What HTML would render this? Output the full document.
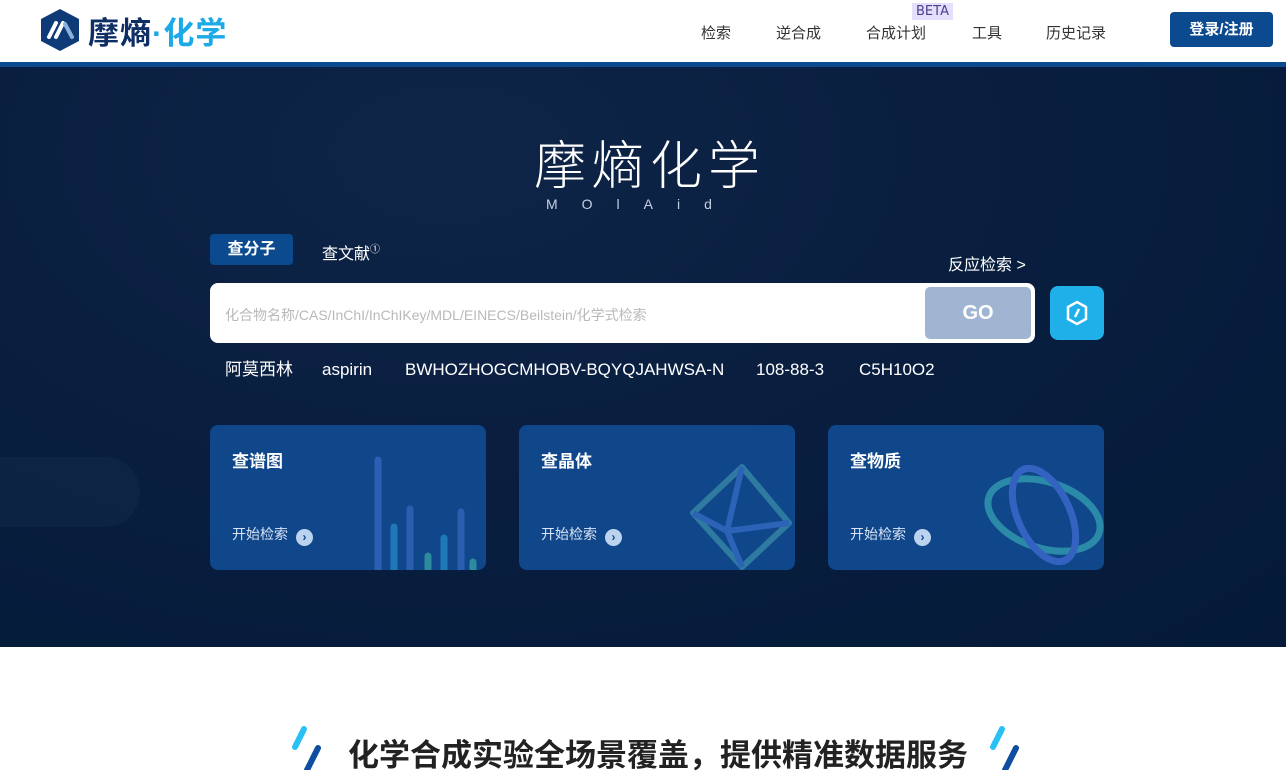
<!DOCTYPE html>
<html><head><meta charset="utf-8"><style>
*{margin:0;padding:0;box-sizing:border-box}
body{width:1286px;height:770px;overflow:hidden;background:#fff;font-family:"Liberation Sans","Noto Sans CJK SC",sans-serif;position:relative}
.a{position:absolute}
.nav{font-size:15px;color:#333;top:22px}
.hero{top:62px;left:0;width:1286px;height:585px;background:radial-gradient(ellipse at 35% 15%,#0e2548 0%,#0a1f40 40%,#041a38 100%);border-top:5px solid #0a4a8f}
.card{background:#10478a;border-radius:8px;width:276px;height:145px;top:425px;overflow:hidden}
.card .t{position:absolute;left:22px;top:22px;color:#fff;font-weight:bold;font-size:17px}
.card .s{position:absolute;left:22px;top:99px;color:#d8e4f5;font-size:14px}
.arr{display:inline-block;width:17px;height:17px;border-radius:50%;background:#bcd3f0;color:#10478a;font-size:12px;text-align:center;line-height:17px;margin-left:8px;vertical-align:-2px;font-weight:bold}
.q{color:#fff;font-size:17px;top:359px;line-height:22px}
</style></head><body>
<svg class="a" style="left:40px;top:8px" width="40" height="44" viewBox="0 0 40 44"><polygon points="20,1 39,11 39,33 20,43 1,33 1,11" fill="#0e3a78"/><path d="M9 29 L16 15 M16 29 L23 15" stroke="#fff" stroke-width="4" stroke-linecap="round"/><path d="M25 16 L32 29" stroke="#8fb2dc" stroke-width="4" stroke-linecap="round"/></svg>
<div class="a" style="left:88px;top:8px;font-size:31px;font-weight:bold;color:#0e2e66;letter-spacing:1px">摩熵<span style="color:#1ba9e8">·化学</span></div>
<div class="a nav" style="left:701px">检索</div>
<div class="a nav" style="left:776px">逆合成</div>
<div class="a nav" style="left:866px">合成计划</div>
<div class="a" style="left:912px;top:3px;background:#e4e0fb;color:#4a3f8f;font-size:13px;padding:1px 4px;font-family:'DejaVu Sans',sans-serif">BETA</div>
<div class="a nav" style="left:972px">工具</div>
<div class="a nav" style="left:1046px">历史记录</div>
<div class="a" style="left:1170px;top:12px;width:103px;height:35px;background:#0b4a8e;border-radius:4px;color:#fff;font-size:15px;font-weight:bold;text-align:center;line-height:35px">登录/注册</div>
<div class="a hero">
 <div class="a" style="left:-60px;top:390px;width:200px;height:70px;border-radius:35px;background:rgba(120,150,190,.05)"></div>
</div>
<div class="a" style="left:534px;top:124px;font-size:52px;color:#fff;letter-spacing:6px;font-weight:300">摩熵化学</div>
<div class="a" style="left:546px;top:196px;font-size:14px;color:#c4d0e4;letter-spacing:24px">MOlAid</div>
<div class="a" style="left:210px;top:234px;width:83px;height:31px;background:#0b4a8e;border-radius:4px;color:#fff;font-weight:bold;font-size:16px;text-align:center;line-height:31px">查分子</div>
<div class="a" style="left:322px;top:240px;color:#fff;font-size:16px">查文献<sup style="font-size:10px">①</sup></div>
<div class="a" style="left:948px;top:251px;color:#fff;font-size:16px">反应检索 &gt;</div>
<div class="a" style="left:210px;top:283px;width:825px;height:60px;background:#fff;border-radius:8px"></div>
<div class="a" style="left:225px;top:305px;color:#b9b9b9;font-size:14px">化合物名称/CAS/InChI/InChIKey/MDL/EINECS/Beilstein/化学式检索</div>
<div class="a" style="left:925px;top:287px;width:106px;height:52px;background:#a0b5d1;border-radius:5px;color:#fff;font-weight:bold;font-size:20px;text-align:center;line-height:52px">GO</div>
<div class="a" style="left:1050px;top:286px;width:54px;height:54px;background:#1fb0ea;border-radius:8px"></div>
<svg class="a" style="left:1065px;top:300px" width="24" height="26" viewBox="0 0 24 26"><polygon points="12,2 21,7 21,19 12,24 3,19 3,7" fill="none" stroke="#fff" stroke-width="2.5"/><path d="M10 17 L14 9" stroke="#fff" stroke-width="2.5"/></svg>
<div class="a q" style="left:225px">阿莫西林</div>
<div class="a q" style="left:322px">aspirin</div>
<div class="a q" style="left:405px">BWHOZHOGCMHOBV-BQYQJAHWSA-N</div>
<div class="a q" style="left:756px">108-88-3</div>
<div class="a q" style="left:859px">C5H10O2</div>
<div class="a card" style="left:210px"><div class="t">查谱图</div><div class="s">开始检索<span class="arr">›</span></div>
 <svg class="a" style="left:0;top:0" width="276" height="145"><g stroke-width="7" stroke-linecap="round"><line x1="168" y1="35" x2="168" y2="160" stroke="#2c5fb3"/><line x1="184" y1="102" x2="184" y2="160" stroke="#1f78b8"/><line x1="200" y1="84" x2="200" y2="160" stroke="#2a5fb0"/><line x1="218" y1="131" x2="218" y2="160" stroke="#2d8a9f"/><line x1="234" y1="113" x2="234" y2="160" stroke="#1f78b8"/><line x1="251" y1="87" x2="251" y2="160" stroke="#2a5fb0"/><line x1="263" y1="137" x2="263" y2="160" stroke="#2d8a9f"/></g></svg>
</div>
<div class="a card" style="left:519px"><div class="t">查晶体</div><div class="s">开始检索<span class="arr">›</span></div>
 <svg class="a" style="left:168px;top:38px" width="108" height="107"><g fill="none" stroke-width="6" stroke-linejoin="round"><polygon points="55,4 102,60 55,104 6,50" stroke="#2f7aa0"/><path d="M55 4 L40 68 L102 60 M6 50 L40 68 L55 104" stroke="#2d63b6"/></g></svg>
</div>
<div class="a card" style="left:828px"><div class="t">查物质</div><div class="s">开始检索<span class="arr">›</span></div>
 <svg class="a" style="left:150px;top:40px" width="126" height="105"><g fill="none" stroke-width="7"><ellipse cx="66" cy="50" rx="58" ry="33" transform="rotate(18 66 50)" stroke="#2a8aa8"/><ellipse cx="66" cy="50" rx="26" ry="50" transform="rotate(-25 66 50)" stroke="#3462c0"/></g></svg>
</div>
<svg class="a" style="left:290px;top:724px" width="34" height="46"><path d="M14 5 L5 23" stroke="#29c1f5" stroke-width="6" stroke-linecap="round"/><path d="M28 24 L17 46" stroke="#0d4ea0" stroke-width="6" stroke-linecap="round"/></svg>
<svg class="a" style="left:988px;top:724px" width="34" height="46"><path d="M14 5 L5 23" stroke="#29c1f5" stroke-width="6" stroke-linecap="round"/><path d="M28 24 L17 46" stroke="#0d4ea0" stroke-width="6" stroke-linecap="round"/></svg>
<div class="a" style="left:348px;top:730px;font-size:31px;font-weight:bold;color:#222">化学合成实验全场景覆盖，提供精准数据服务</div>
</body></html>
